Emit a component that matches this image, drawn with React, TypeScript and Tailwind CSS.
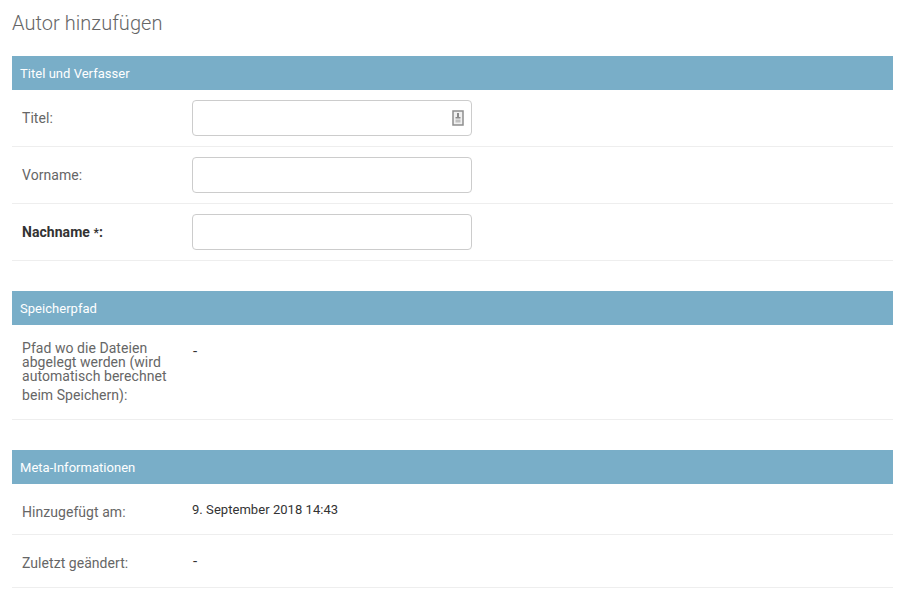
function Header({ children }: { children: React.ReactNode }) {
  return <h2 className="h-[34px] bg-[#79aec8] px-2 pt-px flex items-center text-[13px] tracking-[0.03px] font-normal text-white">{children}</h2>;
}

function Row({ label, bold, h, children }: { label: React.ReactNode; bold?: boolean; h: string; children: React.ReactNode }) {
  return (
    <div className={`flex items-center border-b border-[#eeeeee] px-[10px] ${h}`}>
      <label className={`w-[170px] text-[14px] tracking-[0.05px] ${bold ? "font-bold text-[#333333]" : "text-[#666666]"}`}>{label}</label>
      {children}
    </div>
  );
}

function Input({ icon }: { icon?: boolean }) {
  return (
    <div className="relative h-[36px] w-[280px] rounded border border-[#cccccc] bg-white">
      {icon && (
        <svg className="absolute right-[7px] top-[9px]" width="12" height="16" viewBox="0 0 12 16">
          <rect x="1" y="1" width="10" height="14" fill="#f0f0f0" stroke="#8e8e8e" strokeWidth="1.5" />
          <rect x="5" y="3" width="2" height="4" fill="#8a8a8a" />
          <rect x="3.5" y="7" width="5" height="1.5" fill="#8a8a8a" />
          <rect x="3.5" y="9.5" width="5" height="3" fill="#c0c0c0" />
        </svg>
      )}
    </div>
  );
}

function Dash() {
  return <div className="ml-px text-[15px] leading-[16px] text-[#333333]">-</div>;
}

export default function App() {
  return (
    <div className="h-[591px] w-[904px] overflow-hidden bg-white px-3 pr-[11px] font-['Roboto',sans-serif]">
      <h1 className="h-[56px] pt-[10px] text-[20px] leading-[26px] tracking-[0.05px] font-light text-[#666666]">Autor hinzufügen</h1>

      <Header>Titel und Verfasser</Header>
      <Row label="Titel:" h="h-[57px]"><Input icon /></Row>
      <Row label="Vorname:" h="h-[57px]"><Input /></Row>
      <Row label={<>Nachname <span className="text-[12px]">*</span>:</>} bold h="h-[57px]"><Input /></Row>

      <div className="mt-[30px]"><Header>Speicherpfad</Header></div>
      <div className="flex h-[95px] border-b border-[#eeeeee] px-[10px] pt-4">
        <label className="w-[170px] text-[14px] leading-[14px] tracking-[0.05px] text-[#666666]">
          <div>Pfad wo die Dateien</div>
          <div>abgelegt werden (wird</div>
          <div>automatisch berechnet</div>
          <div className="mt-[5px]">beim Speichern):</div>
        </label>
        <div className="pt-[2px]"><Dash /></div>
      </div>

      <div className="mt-[30px]"><Header>Meta-Informationen</Header></div>
      <div className="flex h-[51px] items-center border-b border-[#eeeeee] px-[10px] pt-[6px]">
        <label className="w-[170px] text-[14px] tracking-[0.05px] text-[#666666]">Hinzugefügt am:</label>
        <div className="-mt-[5px] text-[13px] tracking-[0.05px] text-[#333333]">9. September 2018 14:43</div>
      </div>
      <div className="flex h-[53px] items-center border-b border-[#eeeeee] px-[10px] pt-[5px]">
        <label className="w-[170px] text-[14px] tracking-[0.05px] text-[#666666]">Zuletzt geändert:</label>
        <div className="-mt-[5px]"><Dash /></div>
      </div>
    </div>
  );
}
